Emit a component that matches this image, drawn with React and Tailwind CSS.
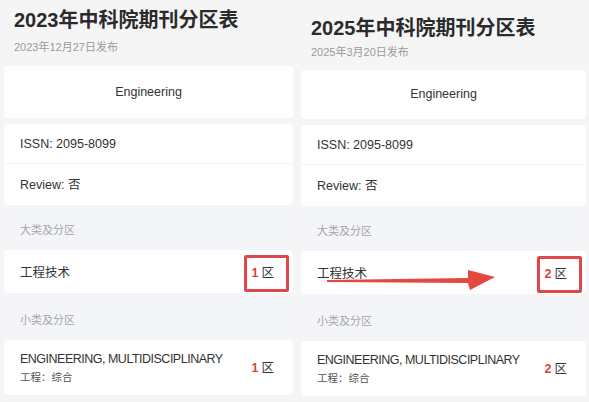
import React from "react";

const font = { fontFamily: '"Liberation Sans", "Noto Sans CJK SC", sans-serif' };

function Zone({ n, boxed }) {
  return (
    <div className="relative flex items-center gap-[3px] text-[12.5px] leading-[18px]">
      <span className="font-bold text-[#d9423f]">{n}</span>
      <span className="text-[#333]">区</span>
      {/* Rote Markierung */}
      {boxed && (
        <div className="absolute -left-[8px] -right-[15px] -top-[9px] -bottom-[10px] rounded-[2px] border-[3px] border-[#e0474c]" />
      )}
    </div>
  );
}

function Panel({ year, date, zone, titleCls, subCls, cardCls, cls, arrow }) {
  return (
    <div className={`relative bg-[#f5f5f6] ${cls}`}>
      <h1 className={`pl-[10px] text-[20px] font-bold leading-[24px] text-[#2b2b2b] ${titleCls}`}>
        {year}年中科院期刊分区表
      </h1>
      <p className={`pl-[10px] text-[11px] leading-[14px] text-[#9a9a9a] ${subCls}`}>{date}发布</p>

      <div className={`flex items-center justify-center rounded-[4px] bg-white text-[12.5px] text-[#333] ${cardCls}`}>
        Engineering
      </div>

      <div className="mt-[6px] rounded-[4px] bg-white text-[12.5px] text-[#333]">
        <div className="flex h-[40px] items-center border-b border-[#f2f2f2] pl-[16px] pt-[2px]">ISSN: 2095-8099</div>
        <div className="flex h-[41px] items-center pl-[16px] pt-[2px]">Review: 否</div>
      </div>

      <div className="flex h-[45px] items-center bg-[#f3f5f8] pl-[16px] pt-[6px] text-[11px] text-[#a6a6a6]">大类及分区</div>

      <div className="flex h-[43px] items-center justify-between rounded-[4px] bg-white pl-[16px] pr-[19px] pt-[3px] text-[12.5px] text-[#333]">
        <span>工程技术</span>
        <Zone n={zone} boxed />
      </div>

      <div className="flex h-[47px] items-center bg-[#f3f5f8] pl-[16px] pt-[8px] text-[11px] text-[#a6a6a6]">小类及分区</div>

      <div className="flex h-[55px] items-center justify-between rounded-[4px] bg-white pl-[16px] pr-[19px] text-[#333]">
        <div className="flex flex-col">
          <span className="text-[12.5px] leading-[19px] tracking-[-0.5px]">ENGINEERING, MULTIDISCIPLINARY</span>
          <span className="text-[10.5px] leading-[16px] text-[#555]">工程：综合</span>
        </div>
        <Zone n={zone} />
      </div>

      {arrow && (
        <svg className="absolute left-[28px] top-[266px]" width="176" height="26" viewBox="0 0 176 26">
          <polygon points="2,14 143,12 143,4 170,11 145,24 143,17 2,16" fill="#e5483f" />
        </svg>
      )}
    </div>
  );
}

export default function App() {
  return (
    <div className="flex h-[402px] w-[589px] overflow-hidden bg-[#f5f5f6]" style={font}>
      <Panel
        year="2023"
        date="2023年12月27日"
        zone="1"
        cls="w-[297px] px-[4px]"
        titleCls="pt-[8px]"
        subCls="mt-[8px]"
        cardCls="mt-[12px] h-[52px]"
      />
      <Panel
        year="2025"
        date="2025年3月20日"
        zone="2"
        cls="flex-1 pl-[4px] pr-[3px]"
        titleCls="pt-[16px]"
        subCls="mt-[5px]"
        cardCls="mt-[11px] h-[49px]"
        arrow
      />
    </div>
  );
}
